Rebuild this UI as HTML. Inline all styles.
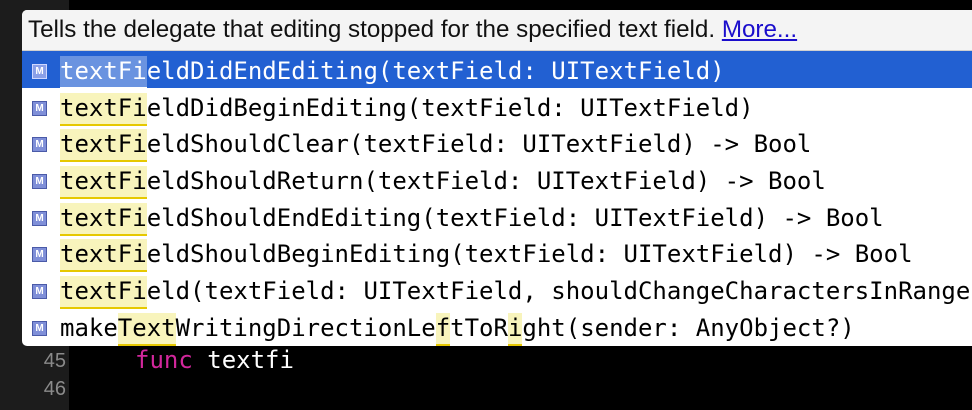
<!DOCTYPE html>
<html><head><style>
body{margin:0;width:972px;height:410px;background:#000;position:relative;overflow:hidden;font-family:"DejaVu Sans Mono","Liberation Mono",monospace}
.gut{position:absolute;left:0;top:0;width:69px;height:410px;background:#1c1c1c}
.ln{position:absolute;left:0;width:66px;text-align:right;color:#8a8a8a;font-size:20px;font-family:"Liberation Sans",sans-serif}
.code{position:absolute;font-size:24px;color:#fff}
.pop{position:absolute;left:22px;top:10px;width:960px;height:336px;background:#fff;border-radius:5px;overflow:hidden}
.hd{height:40px;background:#f4f4f4;border-bottom:1px solid #d0d0d0;font-family:"Liberation Sans",sans-serif;font-size:24.2px;line-height:40px;padding-left:6px;color:#111}
.hd a{color:#1a0dcc;text-decoration:underline}
.row{position:relative;height:36.7px;line-height:36.7px;font-size:24px;color:#000;white-space:pre}
.row .t{position:absolute;left:38px;top:2px}
.row.sel{background:#2260d2;color:#fff}
.m{position:absolute;left:10px;top:13px;width:13px;height:13px;background:#7f8fd8;border:1px solid #4a5aa8;color:#fff;font-family:"Liberation Sans",sans-serif;font-size:10px;line-height:13px;text-align:center;font-weight:bold;box-sizing:content-box}
.sel .m{background:#8aa0e8;border-color:#cfd8ff}
.h{background:#f8f4bc;border-bottom:2px solid #e6c800;display:inline-block;line-height:31px;height:31px;margin-top:1px}
.sel .h{background:#6a93e0;border-bottom:2px solid #fff}
</style></head><body>
<div class="gut"></div>
<div class="ln" style="top:350px">45</div>
<div class="ln" style="top:378px">46</div>
<div class="code" style="left:135px;top:346px"><span style="color:#d2279c">func</span> textfi</div>
<div class="pop">
<div class="hd">Tells the delegate that editing stopped for the specified text field. <a>More...</a></div>
<div class="row sel"><span class="m">M</span><span class="t"><span class="h">textFi</span>eldDidEndEditing(textField: UITextField)</span></div>
<div class="row"><span class="m">M</span><span class="t"><span class="h">textFi</span>eldDidBeginEditing(textField: UITextField)</span></div>
<div class="row"><span class="m">M</span><span class="t"><span class="h">textFi</span>eldShouldClear(textField: UITextField) -&gt; Bool</span></div>
<div class="row"><span class="m">M</span><span class="t"><span class="h">textFi</span>eldShouldReturn(textField: UITextField) -&gt; Bool</span></div>
<div class="row"><span class="m">M</span><span class="t"><span class="h">textFi</span>eldShouldEndEditing(textField: UITextField) -&gt; Bool</span></div>
<div class="row"><span class="m">M</span><span class="t"><span class="h">textFi</span>eldShouldBeginEditing(textField: UITextField) -&gt; Bool</span></div>
<div class="row"><span class="m">M</span><span class="t"><span class="h">textFi</span>eld(textField: UITextField, shouldChangeCharactersInRange</span></div>
<div class="row"><span class="m">M</span><span class="t">make<span class="h">Text</span>WritingDirectionLe<span class="h">f</span>tToR<span class="h">i</span>ght(sender: AnyObject?)</span></div>
</div>
</body></html>
